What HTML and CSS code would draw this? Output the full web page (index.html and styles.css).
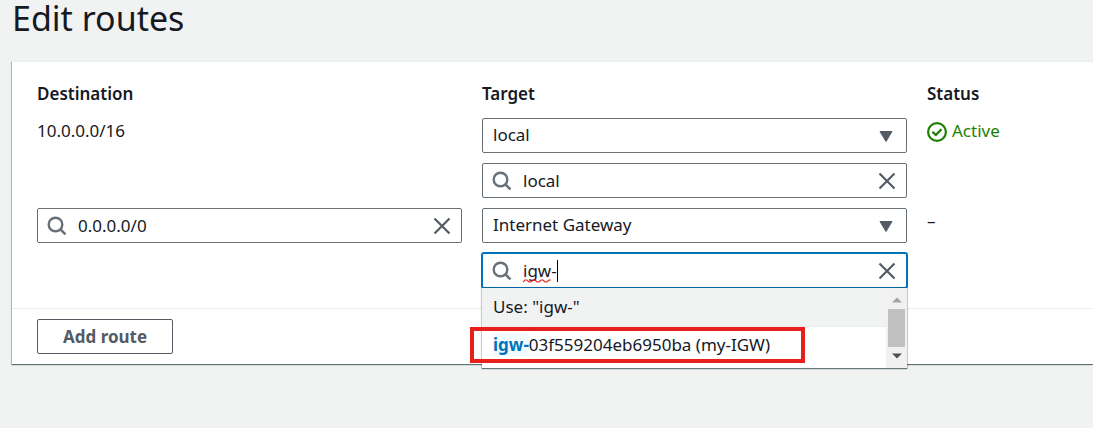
FILE: index.html
```html
<!DOCTYPE html>
<html lang="en">
<head>
<meta charset="utf-8">
<title>Edit routes</title>
<link rel="stylesheet" href="styles.css">
</head>
<body>
<svg class="sprite" aria-hidden="true">
  <symbol id="search" viewBox="0 0 20 20"><circle cx="8.5" cy="8.5" r="6.8" fill="none" stroke="#687078" stroke-width="2.4"/><path d="M13.2 13.2 18.4 18.4" stroke="#687078" stroke-width="2.6"/></symbol>
  <symbol id="close" viewBox="0 0 18 18"><path d="M1.5 1.5 16.5 16.5M16.5 1.5 1.5 16.5" stroke="#545b64" stroke-width="2.2"/></symbol>
  <symbol id="caret" viewBox="0 0 14 11"><path d="M1 .5H13L7 10.5Z" fill="#545b64" stroke="#545b64" stroke-linejoin="round"/></symbol>
</svg>
<main class="page">
  <h1 class="title">Edit routes</h1>
  <form class="panel">
    <div class="routes">
      <div class="heading" id="h-dest">Destination</div>
      <div class="heading" id="h-target">Target</div>
      <div class="heading" id="h-status">Status</div>

      <div class="value">10.0.0.0/16</div>
      <div class="stack">
        <div class="field">
          <select class="control" aria-labelledby="h-target"><option>local</option></select>
          <svg class="arrow"><use href="#caret"/></svg>
        </div>
        <div class="field">
          <svg class="lens"><use href="#search"/></svg>
          <input class="control search" type="text" value="local" aria-labelledby="h-target">
          <button class="clear" type="button" aria-label="Clear"><svg><use href="#close"/></svg></button>
        </div>
      </div>
      <div class="value status">
        <svg class="ok" viewBox="0 0 20 20"><circle cx="10" cy="10" r="8.9" fill="none" stroke="#1d8102" stroke-width="2.2"/><path d="M5.4 9.9 8.9 13 14.4 7.2" fill="none" stroke="#1d8102" stroke-width="2.3"/></svg>
        <span>Active</span>
      </div>

      <div class="stack">
        <div class="field">
          <svg class="lens"><use href="#search"/></svg>
          <input class="control search" type="text" value="0.0.0.0/0" aria-labelledby="h-dest">
          <button class="clear" type="button" aria-label="Clear"><svg><use href="#close"/></svg></button>
        </div>
      </div>
      <div class="stack">
        <div class="field">
          <select class="control" aria-labelledby="h-target"><option>Internet Gateway</option></select>
          <svg class="arrow"><use href="#caret"/></svg>
        </div>
        <div class="field">
          <svg class="lens"><use href="#search"/></svg>
          <input class="control search active" type="text" value="igw-" spellcheck="false" aria-labelledby="h-target">
          <svg class="squiggle" viewBox="0 0 28 4"><path d="M0 3 2 1 4 1 6 3 8 3 10 1 12 1 14 3 16 3 18 1 20 1 22 3 24 3 26 1 28 1" fill="none" stroke="#e8201c" stroke-width="1.2"/></svg>
          <span class="cursor"></span>
          <button class="clear" type="button" aria-label="Clear"><svg><use href="#close"/></svg></button>
          <div class="dropdown">
            <ul class="options" role="listbox" aria-label="Targets">
              <li class="option use" role="option">Use: "igw-"</li>
              <li class="option" role="option"><mark class="match">igw-</mark>03f559204eb6950ba (my-IGW)</li>
            </ul>
            <div class="scrollbar">
              <svg class="step" viewBox="0 0 10 6"><path d="M0 5.5 5 .5 10 5.5Z" fill="#a3a3a3"/></svg>
              <span class="thumb"></span>
              <svg class="step" viewBox="0 0 10 6"><path d="M0 .5H10L5 5.5Z" fill="#505050"/></svg>
            </div>
          </div>
          <div class="callout"></div>
        </div>
      </div>
      <div class="value">–</div>
    </div>
    <div class="footer"><button class="add" type="button">Add route</button></div>
  </form>
</main>
</body>
</html>
```
FILE: styles.css
```css
* { box-sizing: border-box; }
html { background: #f1f3f3; }
body {
  margin: 0;
  min-height: 100vh;
  color: #16191f;
  font: 17px/26px "Noto Sans", "Open Sans", sans-serif;
}
.sprite { position: absolute; width: 0; height: 0; }
.page { padding-left: 12px; }
.title {
  margin: 0 0 25px;
  font-size: 34px;
  line-height: 36px;
  font-weight: 400;
}
.panel {
  background: #fff;
  border-top: 1px solid #eaeded;
  box-shadow: 0 1px 1px 0 rgba(0, 28, 36, .5), -1px 1px 1px 0 rgba(0, 28, 36, .2);
}
.routes {
  display: grid;
  grid-template-columns: 425fr 425fr 166fr;
  gap: 10px 20px;
  padding: 19px 0 20px 25px;
}
.heading { padding-bottom: 1px; font-weight: 600; }
.stack { display: grid; gap: 10px; align-content: start; min-width: 0; }
.field { position: relative; }
.control {
  display: block;
  width: 100%;
  height: 35px;
  margin: 0;
  padding: 0 40px 1px 10px;
  border: 1px solid #687078;
  border-radius: 2px;
  background: #fff;
  color: inherit;
  font: inherit;
  appearance: none;
  outline: 0;
}
.search { padding: 0 40px; }
.active { border-color: #0073bb; box-shadow: 0 0 0 1px #0073bb; }
.lens { position: absolute; left: 10px; top: 8px; width: 20px; height: 20px; }
.arrow { position: absolute; right: 14px; top: 13px; width: 14px; height: 11px; }
.clear {
  position: absolute;
  right: 10px;
  top: 8px;
  width: 20px;
  height: 20px;
  padding: 1px;
  border: 0;
  background: none;
}
.clear svg { display: block; width: 18px; height: 18px; }
.squiggle { position: absolute; left: 41px; top: 26px; width: 28px; height: 4px; }
.cursor { position: absolute; left: 75px; top: 7px; width: 1px; height: 22px; background: #000; }
.status { display: flex; gap: 5px; color: #1d8102; }
.ok { width: 20px; height: 20px; margin-top: 4px; }
.dropdown {
  position: absolute;
  z-index: 1;
  top: 100%;
  left: 0;
  right: 0;
  display: flex;
  height: 80px;
  background: #fff;
  box-shadow: 0 1px 1px 0 rgba(0, 28, 36, .5), 0 0 1px 1px rgba(0, 28, 36, .15);
}
.options { flex: 1; margin: 0; padding: 0; list-style: none; }
.option { padding: 5px 11px 6px; white-space: nowrap; }
.use { padding: 6px 11px; background: #f1f3f3; border-bottom: 1px solid #eaeded; }
.match { background: #f1faff; color: #0073bb; font-weight: 700; }
.scrollbar {
  display: flex;
  flex-direction: column;
  align-items: center;
  justify-content: space-between;
  width: 21px;
  padding: 9px 2px;
  background: #f1f1f1;
}
.step { width: 10px; height: 6px; }
.thumb { width: 17px; height: 38px; background: #c1c1c1; }
.callout {
  position: absolute;
  z-index: 2;
  left: -12px;
  top: 74px;
  width: 335px;
  height: 36px;
  border: 4px solid #e8201c;
}
.footer { padding: 10px 25px; border-top: 1px solid #eaeded; }
.add {
  display: block;
  height: 35px;
  padding: 0 25px;
  border: 1px solid #545b64;
  border-radius: 2px;
  background: #fff;
  color: #545b64;
  font: inherit;
  font-weight: 700;
}
```
